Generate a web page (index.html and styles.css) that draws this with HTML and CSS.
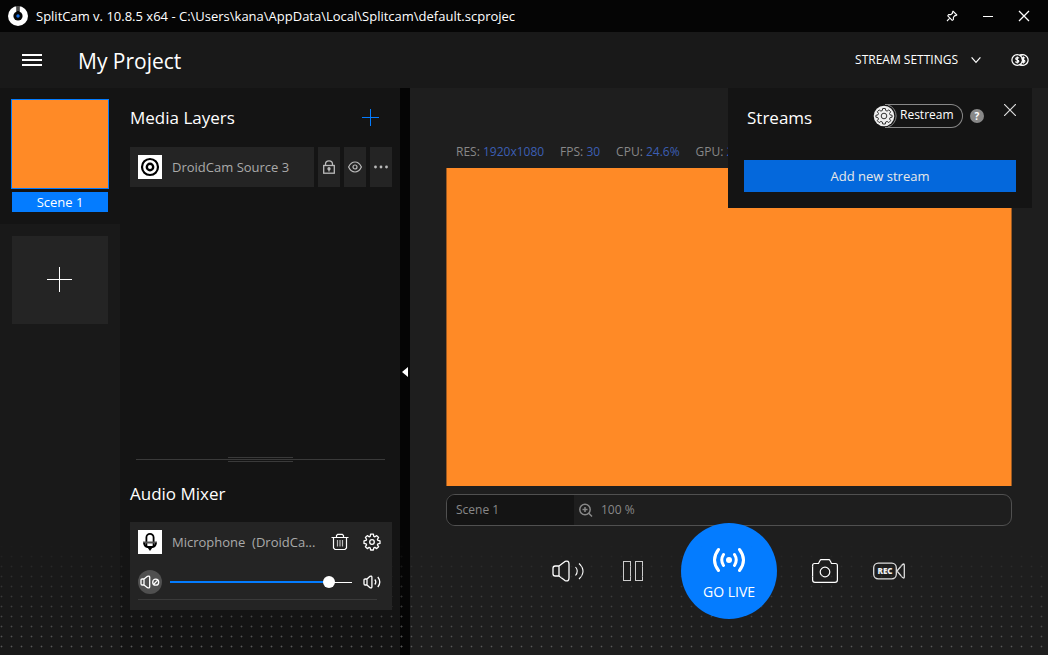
FILE: index.html
```html
<!DOCTYPE html>
<html lang="en">
<head>
<meta charset="utf-8">
<meta name="viewport" content="width=device-width, initial-scale=1">
<title>SplitCam</title>
<link rel="stylesheet" href="styles.css">
</head>
<body>
<div class="app">
  <div class="titlebar">
    <svg class="logo" width="20" height="20" viewBox="0 0 20 20" aria-hidden="true">
      <circle cx="10" cy="10" r="10" fill="#fff"/>
      <circle cx="10" cy="10" r="4.6" fill="#050505"/>
      <rect x="8.4" y="0" width="3.2" height="7" fill="#050505"/>
      <rect x="9.4" y="0" width="1.2" height="5" fill="#777"/>
      <circle cx="10" cy="10" r="1.7" fill="#1670e8"/>
    </svg>
    <span class="window-title">SplitCam v. 10.8.5 x64 - C:\Users\kana\AppData\Local\Splitcam\default.scprojec</span>
    <div class="window-buttons">
      <button class="icon-button" aria-label="Pin"><svg width="12" height="12" viewBox="0 0 12 12" fill="none" stroke="#fff" stroke-width="1.1" stroke-linejoin="round"><path d="M7 1.2 10.8 5 9.6 5.8 9 5.4 7.4 7.3 7.4 9.6 6.2 10.4 1.8 5.8 2.6 4.6 4.9 4.6 6.7 3 6.3 2.3ZM3.8 8.2 1 11"/></svg></button>
      <button class="icon-button" aria-label="Minimize"><svg width="12" height="12" viewBox="0 0 12 12"><path d="M1 6.5h10" stroke="#fff"/></svg></button>
      <button class="icon-button" aria-label="Close window"><svg width="12" height="12" viewBox="0 0 12 12"><path d="M1 1 11 11M11 1 1 11" stroke="#fff" stroke-width="1.3"/></svg></button>
    </div>
  </div>

  <header class="header">
    <button class="icon-button" aria-label="Menu"><svg width="20" height="14" viewBox="0 0 20 14"><path d="M0 2h20M0 7h20M0 12h20" stroke="#fff" stroke-width="2"/></svg></button>
    <h1 class="project-name">My Project</h1>
    <button class="settings-button">STREAM SETTINGS
      <svg width="10" height="8" viewBox="0 0 10 8" fill="none" stroke="#fff" stroke-width="1.2" aria-hidden="true"><path d="M.6 1.4 5 6.4 9.4 1.4"/></svg>
    </button>
    <button class="icon-button" aria-label="Donations">
      <svg width="18" height="12" viewBox="0 0 18 12" fill="none" stroke="#fff" stroke-width="1.2">
        <circle cx="6.2" cy="6" r="5.3"/><path d="M9.2 1.4A5.3 5.3 0 1 1 9.2 10.6"/><path d="M8.6.8h3M8.6 11.2h3"/>
        <path d="M8 4.3C7.3 3.2 4.7 3.3 4.7 4.7 4.7 6.2 7.8 5.6 7.8 7.3 7.8 8.8 5 8.8 4.4 7.5M6.3 2.5v7"/>
        <path d="M13.8 4.3C13.2 3.2 11 3.3 11 4.7 11 6.2 13.9 5.6 13.9 7.3 13.9 8.8 11.4 8.8 10.8 7.5M12.4 2.5v7"/>
      </svg>
    </button>
  </header>

  <main class="workspace">
    <nav class="scenes" aria-label="Scenes">
      <div class="scene-slot">
        <button class="scene"><span class="scene-thumb"></span><span class="scene-label">Scene 1</span></button>
      </div>
      <button class="add-scene" aria-label="Add scene"><svg width="26" height="26" viewBox="0 0 26 26"><path d="M0 12.5h25M12.5 0v25" stroke="#fff"/></svg></button>
    </nav>

    <aside class="sources">
      <section class="layers">
        <div class="section-head">
          <h2 class="section-title">Media Layers</h2>
          <button class="icon-button add-layer" aria-label="Add layer"><svg width="20" height="20" viewBox="0 0 20 20"><path d="M2 9.5h17M10.5 1v17" stroke="#047cff"/></svg></button>
        </div>
        <div class="layer-row">
          <div class="layer-name">
            <svg width="24" height="24" viewBox="0 0 24 24" aria-hidden="true"><rect width="24" height="24" fill="#fff"/><circle cx="12" cy="12" r="8" fill="none" stroke="#000" stroke-width="2.2"/><circle cx="12" cy="12" r="3.2" fill="none" stroke="#000" stroke-width="2.4"/></svg>
            <span>DroidCam Source 3</span>
          </div>
          <button class="layer-tool" aria-label="Lock"><svg width="12" height="14" viewBox="0 0 12 14" fill="none" stroke="#bbb" stroke-width="1.3"><rect x=".7" y="5.5" width="10.6" height="7.7"/><path d="M2.5 5.500V4a3.500 3.200 0 0 1 7 0v1.500"/><circle cx="6" cy="8.700" r="1" fill="#bbb"/><path d="M6 9v2.500"/></svg></button>
          <button class="layer-tool" aria-label="Visibility"><svg width="14" height="12" viewBox="0 0 14 12" fill="none" stroke="#bbb" stroke-width="1.2"><path d="M.6 6C2.200 2.600 4.400 1 7 1s4.800 1.600 6.400 5C11.800 9.400 9.600 11 7 11S2.200 9.400.6 6Z"/><circle cx="7" cy="6" r="2"/></svg></button>
          <button class="layer-tool" aria-label="More"><svg width="14" height="4" viewBox="0 0 14 4" fill="#bbb"><circle cx="1.5" cy="2" r="1.400"/><circle cx="7" cy="2" r="1.400"/><circle cx="12.500" cy="2" r="1.400"/></svg></button>
        </div>
      </section>
      <div class="splitter"><span class="splitter-grip"></span></div>
      <section class="mixer">
        <h2 class="section-title">Audio Mixer</h2>
        <div class="mixer-card">
          <div class="mixer-row">
            <svg width="24" height="24" viewBox="0 0 24 24" fill="none" stroke="#000" stroke-width="1.8" aria-hidden="true"><rect width="24" height="24" fill="#fff" stroke="none"/><path d="M8.400 16.500V7.500a3.600 3.600 0 0 1 7.200 0v9"/><path d="M5 12.500h14" stroke="#555" stroke-width="2"/><path d="M6 13q.5 3.500 3.500 4h5q3-.5 3.500-4"/><path d="M9.500 17.500h5L12 21Z" fill="#000" stroke="none"/></svg>
            <span class="device-name">Microphone&nbsp; (DroidCa...</span>
            <button class="icon-button" aria-label="Remove"><svg width="18" height="18" viewBox="0 0 18 18" fill="none" stroke="#fff" stroke-width="1.2"><path d="M.5 4.500h17M5.500 4V2.500L6.700 1.300h4.600l1.200 1.200V4M2.500 4.500V15l1.500 1.500h10l1.500-1.500V4.500"/><path d="M6.500 7v6.500M9 7v6.500M11.500 7v6.500" stroke="#bbb"/></svg></button>
            <button class="icon-button" aria-label="Device settings"><svg width="18" height="18" viewBox="0 0 18 18" fill="none" stroke="#fff" stroke-width="1.3" stroke-linejoin="round"><path d="M7.600 1.200h2.800l.4 2.100 1.100.5 1.800-1.200 1.900 1.900-1.200 1.800.5 1.100 2.100.4v2.600l-2.100.4-.5 1.100 1.200 1.800-1.900 1.900-1.800-1.200-1.100.5-.4 2.100H7.600l-.4-2.100-1.100-.5-1.800 1.200-1.900-1.900 1.200-1.800-.5-1.100L1 10.400V7.800l2.100-.4.500-1.100-1.200-1.800 1.900-1.900 1.800 1.200 1.100-.5Z"/><circle cx="9" cy="9" r="2.3"/></svg></button>
          </div>
          <div class="mixer-row">
            <button class="mute-button" aria-label="Mute"><svg width="20" height="14" viewBox="0 0 20 14" fill="none" stroke="#fff" stroke-width="1.3" stroke-linejoin="round"><path d="M4 4H2.200Q1 4 1 5.200v3.600Q1 10 2.200 10H4ZM4 4l3.500-2.700q2.200-.8 2.200 1v9.400q0 1.800-2.200 1L4 10"/><circle cx="15.700" cy="7.200" r="3"/><path d="m13.700 9.300 4-4.200"/></svg></button>
            <input class="volume" type="range" min="0" max="100" value="90" style="--level: 90%" aria-label="Microphone volume">
            <button class="icon-button" aria-label="Volume"><svg width="18" height="14" viewBox="0 0 18 14" fill="none" stroke="#fff" stroke-width="1.3" stroke-linejoin="round"><path d="M4 4H2.200Q1 4 1 5.200v3.600Q1 10 2.200 10H4ZM4 4l3-2.700q1.900-.8 1.900 1v9.400q0 1.800-1.900 1L4 10"/><path d="M11.800 4.500q2 2.500 0 5M14.800 2q4 5 0 10"/></svg></button>
          </div>
          <div class="meter"></div>
        </div>
      </section>
    </aside>

    <button class="collapse" aria-label="Collapse panel"><svg width="6" height="10" viewBox="0 0 6 10"><path d="M6 0v10L0 5Z" fill="#fff"/></svg></button>

    <section class="stage">
      <div class="stats">
        <span>RES: <b>1920x1080</b></span><span>FPS: <b>30</b></span><span>CPU: <b>24.6%</b></span><span>GPU: <b>2</b></span>
      </div>
      <div class="preview"></div>
      <div class="statusbar">
        <span class="status-scene">Scene 1</span>
        <svg width="14" height="14" viewBox="0 0 14 14" fill="none" stroke="#888" stroke-width="1.5" aria-hidden="true"><circle cx="6" cy="6.500" r="5.200"/><path d="m9.800 10.300 3.200 3.200M6 4v5M3.500 6.500h5"/></svg>
        <span>100 %</span>
      </div>
      <div class="controls">
        <button class="control" aria-label="Sound"><svg width="34" height="22" viewBox="0 0 34 22" fill="none" stroke="#fff" stroke-width="1.3" stroke-linejoin="round"><path d="M7 6H3.200Q1 6 1 8.200v5.600Q1 16 3.200 16H7ZM7 6l6-4.600q4-1.400 4 2.600v14q0 4-4 2.600L7 16"/><path d="M23.500 7q3.500 4 0 8.500M27 3.500q8 7.500 0 15.500" stroke-width="1.1"/></svg></button>
        <button class="control" aria-label="Pause"><svg width="20" height="20" viewBox="0 0 20 20" fill="none" stroke="#ccc"><rect x=".5" y=".5" width="7" height="19"/><rect x="12.500" y=".5" width="7" height="19"/></svg></button>
        <button class="go-live">
          <svg width="34" height="26" viewBox="0 0 34 26" fill="none" stroke="#fff" stroke-width="3" stroke-linecap="round" aria-hidden="true"><circle cx="17" cy="13" r="3" fill="#fff" stroke="none"/><path d="M11.500 7.500q-3.500 5.500 0 11M22.500 7.500q3.500 5.500 0 11M6.500 2.500q-8 10.500 0 21M27.500 2.500q8 10.500 0 21"/></svg>
          GO LIVE
        </button>
        <button class="control" aria-label="Snapshot"><svg width="26" height="24" viewBox="0 0 26 24" fill="none" stroke="#fff" stroke-width="1.2"><path d="M2.500 4.500h4L8 1.500Q8.300.7 9.200.7h7.600q.9 0 1.200.8l1.500 3h4q1.900 0 1.900 1.900v14.500q0 2.400-2.400 2.400H3Q.6 23.300.6 20.900V6.400q0-1.900 1.900-1.900Z"/><circle cx="13" cy="13" r="4.800"/></svg></button>
        <button class="control" aria-label="Record"><svg width="32" height="18" viewBox="0 0 32 18" fill="none" stroke="#ddd" stroke-width="1.3"><rect x=".7" y="1.200" width="22.600" height="15.600" rx="4.500"/><path d="M24 9 29 3q2.300-2 2.300 0v12q0 2-2.300 0Z"/><text class="rec-text" x="12" y="12" text-anchor="middle">REC</text></svg></button>
      </div>
    </section>

    <section class="streams-panel">
      <div class="streams-head">
        <h2 class="section-title">Streams</h2>
        <button class="restream">
          <svg width="24" height="24" viewBox="0 0 24 24" fill="none" aria-hidden="true"><path d="M15 1a11.500 11.500 0 0 1 0 22" stroke="#888"/><circle cx="11" cy="12" r="10.300" fill="#eee"/><path d="M9.700 4.500h2.600l.4 2 1.400.6 1.700-1.200 1.900 1.900-1.200 1.700.6 1.400 2 .4v1.900l-2 .4-.6 1.400 1.200 1.700-1.900 1.900-1.700-1.200-1.400.6-.4 2H9.700l-.4-2-1.400-.6-1.700 1.200-1.900-1.900 1.200-1.700-.6-1.400-2-.4v-1.900l2-.4.600-1.400-1.200-1.700 1.900-1.900 1.700 1.200 1.400-.6Z" stroke="#333" stroke-linejoin="round"/><circle cx="11" cy="12" r="2.800" stroke="#333"/></svg>
          <span class="restream-label">Restream</span>
        </button>
        <button class="help" aria-label="Help">?</button>
        <button class="icon-button close-streams" aria-label="Close streams"><svg width="12" height="12" viewBox="0 0 12 12"><path d="M0 0 12 12M12 0 0 12" stroke="#ddd" stroke-width="1.2"/></svg></button>
      </div>
      <button class="add-stream">Add new stream</button>
    </section>

    <svg class="dots" aria-hidden="true">
      <defs>
        <pattern id="dot" width="10" height="10" patternUnits="userSpaceOnUse"><rect x="0" y="6" width="3" height="1" fill="#303030"/><rect x="1" y="5" width="1" height="3" fill="#303030"/><rect x="1" y="6" width="1" height="1" fill="#5c5c5c"/></pattern>
      </defs>
      <rect width="100%" height="100%" fill="url(#dot)"/>
    </svg>
  </main>
</div>
</body>
</html>
```

FILE: styles.css
```css
* { box-sizing: border-box; }

body {
  margin: 0;
  background: #1e1e1e;
  color: #fff;
  font-family: "Open Sans", "Noto Sans", sans-serif;
  font-size: 13px;
  line-height: 20px;
}

button {
  padding: 0;
  border: 0;
  background: none;
  color: inherit;
  font: inherit;
  cursor: pointer;
}

svg { display: block; flex: none; }
h1, h2 { margin: 0; font-weight: 400; }

.app { display: flex; flex-direction: column; min-height: 100vh; }

.titlebar {
  display: flex;
  align-items: center;
  gap: 8px;
  height: 32px;
  padding: 0 14px 0 8px;
  background: #050505;
}
.window-title { flex: 1; min-width: 0; overflow: hidden; white-space: nowrap; }
.window-buttons { display: flex; gap: 16px; }

.icon-button {
  display: grid;
  place-items: center;
  flex: none;
  width: 20px;
  height: 20px;
}

.header {
  display: flex;
  align-items: center;
  height: 56px;
  padding: 0 18px 0 22px;
  background: #191919;
}
.project-name { flex: 1; margin-left: 36px; padding-top: 2px; font-size: 21px; line-height: 28px; }
.settings-button {
  display: flex;
  align-items: center;
  gap: 13px;
  margin-right: 29px;
  font-size: 12px;
}

.workspace { position: relative; flex: 1; display: flex; }

.scenes { flex: none; width: 120px; background: #191919; }
.scene-slot { height: 136px; padding: 11px; background: #141414; }
.scene { display: flex; flex-direction: column; gap: 3px; width: 100%; align-items: center; }
.scene-thumb { width: 98px; height: 90px; border: 1px solid #047cff; background: #ff8a26; }
.scene-label { width: 96px; height: 20px; background: #047cff; }
.add-scene {
  display: grid;
  place-items: center;
  width: 96px;
  height: 88px;
  margin: 12px;
  background: #242424;
}

.sources {
  flex: none;
  display: flex;
  flex-direction: column;
  width: 280px;
  padding: 16px 8px 45px 10px;
  background: #141414;
}
.section-title { font-size: 17px; line-height: 28px; }
.layers { flex: 1; }
.section-head { display: flex; align-items: center; justify-content: space-between; }
.add-layer { margin-right: 12px; }
.layer-row { display: flex; gap: 4px; height: 40px; margin-top: 15px; color: #aaa; }
.layer-name {
  flex: 1;
  display: flex;
  align-items: center;
  gap: 10px;
  padding-left: 8px;
  background: #242424;
  white-space: nowrap;
}
.layer-tool { display: grid; place-items: center; width: 22px; background: #242424; }

.splitter {
  display: flex;
  align-items: center;
  justify-content: center;
  height: 5px;
  margin: 0 7px 0 6px;
  background: linear-gradient(#3a3a3a, #3a3a3a) center / 100% 1px no-repeat;
}
.splitter-grip { width: 65px; height: 5px; border: solid #3a3a3a; border-width: 1px 0; }

.mixer { padding-top: 18px; }
.mixer-card {
  position: relative;
  z-index: 2;
  height: 88px;
  margin-top: 14px;
  padding: 0 10px 0 8px;
  background: #242424;
  color: #aaa;
}
.mixer-row { display: flex; align-items: center; height: 40px; }
.device-name { flex: 1; margin-left: 10px; white-space: nowrap; }
.mixer-row .icon-button + .icon-button { margin-left: 12px; }
.mute-button {
  display: grid;
  place-items: center;
  flex: none;
  width: 24px;
  height: 24px;
  border-radius: 50%;
  background: #505050;
}
.volume {
  flex: 1;
  min-width: 0;
  height: 12px;
  margin: 0 10px 0 8px;
  appearance: none;
  background:
    linear-gradient(#047cff, #047cff) left center / var(--level) 2px no-repeat,
    linear-gradient(#fff, #fff) center / 100% 1px no-repeat;
}
.volume::-webkit-slider-thumb {
  appearance: none;
  width: 12px;
  height: 12px;
  border-radius: 50%;
  background: #fff;
}
.meter { height: 1px; margin: -3px 5px 0 0; background: #3a3a3a; }

.collapse {
  display: grid;
  place-items: center;
  flex: none;
  width: 10px;
  background: #050505;
}

.stage { flex: 1; min-width: 0; padding: 54px 36px 36px; background: #1e1e1e; }
.stats {
  display: flex;
  gap: 16px;
  height: 26px;
  padding-left: 10px;
  color: #888;
  font-size: 12px;
  white-space: nowrap;
}
.stats b { color: #3c5fb4; font-weight: 400; }
.preview {
  aspect-ratio: 16 / 9;
  border: solid #9c5a22;
  border-width: 0 1px;
  background: #ff8a26;
}
.statusbar {
  display: flex;
  align-items: center;
  gap: 8px;
  height: 32px;
  margin-top: 8px;
  border: 1px solid #505050;
  border-radius: 9px;
  overflow: hidden;
  color: #888;
  font-size: 12px;
}
.status-scene { width: 127px; margin-right: -3px; padding-left: 9px; background: #141414; line-height: 30px; }

.controls { display: flex; justify-content: center; align-items: center; margin-top: -3px; }
.control { display: grid; place-items: center; width: 64px; height: 48px; }
.go-live {
  position: relative;
  z-index: 2;
  display: flex;
  flex-direction: column;
  align-items: center;
  gap: 9px;
  width: 96px;
  height: 96px;
  margin: 0 16px;
  padding-top: 24px;
  border-radius: 50%;
  background: #047cff;
  font-size: 14px;
}
.rec-text { fill: #eee; stroke: none; font-size: 8px; font-weight: 800; }

.streams-panel {
  position: absolute;
  z-index: 3;
  top: 0;
  right: 16px;
  width: 304px;
  padding: 16px;
  background: #141414;
}
.streams-head { display: flex; align-items: center; height: 28px; padding-left: 3px; }
.streams-head .section-title { flex: 1; }
.restream { display: flex; align-items: center; width: 90px; height: 24px; margin-bottom: 4px; }
.restream-label {
  flex: 1;
  height: 24px;
  margin-left: -12px;
  padding-left: 15px;
  border: 1px solid #888;
  border-left: 0;
  border-radius: 0 12px 12px 0;
  font-size: 12px;
  text-align: left;
}
.help {
  width: 14px;
  height: 14px;
  margin: 0 0 4px 7px;
  border-radius: 50%;
  background: #888;
  font-size: 10px;
  font-weight: 700;
  line-height: 14px;
}
.close-streams { margin: 0 -4px 16px 16px; }
.add-stream {
  width: 100%;
  height: 32px;
  margin-top: 28px;
  background: #0468dc;
  color: #e8e8e8;
}

.dots {
  position: absolute;
  z-index: 1;
  left: 0;
  bottom: 0;
  width: 100%;
  height: 115px;
  pointer-events: none;
  mask-image: linear-gradient(transparent, #000);
}
```
